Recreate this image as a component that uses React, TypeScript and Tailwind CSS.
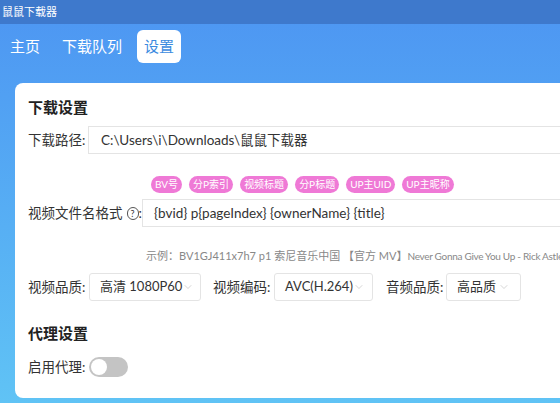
import { ChevronDown } from 'lucide-react';

const TAGS = ['BV号', '分P索引', '视频标题', '分P标题', 'UP主UID', 'UP主昵称'];

function Select({ value, width }: { value: string; width: string }) {
  return (
    <div
      className={`flex h-[28px] shrink-0 items-center justify-between whitespace-nowrap rounded-[3px] border border-[#e4e4e4] bg-white pl-[10px] pr-[10px] text-[13px] text-[#333] ${width}`}
    >
      <span>{value}</span>
      <ChevronDown size={12} strokeWidth={1.2} className="shrink-0 text-[#bbb]" />
    </div>
  );
}

export default function App() {
  return (
    <div
      className="flex h-[403px] w-[560px] flex-col overflow-hidden bg-gradient-to-b from-[#4d95f2] to-[#60c3f5] text-[#333]"
      style={{ fontFamily: 'Lato, "Noto Sans CJK SC", sans-serif' }}
    >
      <div className="flex h-[24px] shrink-0 items-center bg-[#3e79cc] px-[2px] text-[11px] text-white">
        鼠鼠下载器
      </div>

      <nav className="flex h-[45px] shrink-0 items-center pl-[2px] text-[15px] text-white">
        <div className="px-[8px] py-[4px]">主页</div>
        <div className="ml-[6px] px-[8px] py-[4px]">下载队列</div>
        <div className="ml-[7px] rounded-[6px] bg-white px-[7px] py-[5px] text-[#3c8be0]">设置</div>
      </nav>

      <main className="ml-[15px] mt-[14px] w-[620px] whitespace-nowrap rounded-[8px] bg-white pb-[21px] pl-[13px] pt-[12px]">
        <h2 className="text-[15px] font-bold leading-[24px] text-[#222]">下载设置</h2>

        <div className="mt-[7px] flex items-center text-[13.5px]">
          <span className="w-[60px]">下载路径:</span>
          <div className="flex h-[28px] flex-1 items-center border-y border-l border-[#e4e4e4] pl-[12px]">
            C:\Users\i\Downloads\鼠鼠下载器
          </div>
        </div>

        <div className="mt-[22px] flex gap-[7px] pl-[123px]">
          {TAGS.map((t) => (
            <span
              key={t}
              className="rounded-full bg-[#ef79d6] px-[4px] text-[10px] leading-[17px] text-white"
            >
              {t}
            </span>
          ))}
        </div>

        <div className="mt-[6px] flex items-center text-[13.5px]">
          <span className="flex w-[114px] items-center">
            视频文件名格式
            <span className="ml-[4px] flex h-[13px] w-[13px] items-center justify-center rounded-full border border-[#555] text-[9px] leading-none">
              ?
            </span>
            :
          </span>
          <div className="flex h-[28px] flex-1 items-center border-y border-l border-[#e4e4e4] pl-[11px]">
            {'{bvid} p{pageIndex} {ownerName} {title}'}
          </div>
        </div>

        <div className="mt-[22px] pl-[118px] text-[11px] leading-[14px] text-[#888]">
          示例：BV1GJ411x7h7 p1 索尼音乐中国 【官方 MV】
          <span className="text-[10px] tracking-[-0.3px]">Never Gonna Give You Up - Rick Astley.mp4</span>
        </div>

        <div className="mt-[10px] flex items-center text-[13.5px]">
          <span className="w-[61px]">视频品质:</span>
          <Select value="高清 1080P60" width="w-[112px]" />
          <span className="ml-[12px] w-[61px]">视频编码:</span>
          <Select value="AVC(H.264)" width="w-[99px]" />
          <span className="ml-[13px] w-[60px]">音频品质:</span>
          <Select value="高品质" width="w-[75px]" />
        </div>

        <h2 className="mt-[20px] text-[15px] font-bold leading-[24px] text-[#222]">代理设置</h2>

        <div className="mt-[12px] flex items-center text-[13.5px]">
          <span className="w-[61px]">启用代理:</span>
          <div className="flex h-[20px] w-[39px] items-center rounded-full bg-[#c4c4c4] px-[2px]">
            <div className="h-[16px] w-[16px] rounded-full bg-white" />
          </div>
        </div>
      </main>
    </div>
  );
}
